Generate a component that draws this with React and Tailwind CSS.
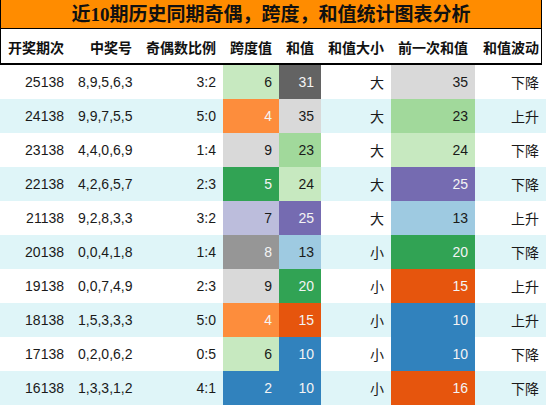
const rows = [
  ["25138", "8,9,5,6,3", "3:2", 6, "#c7e9c0", 31, "#636363", "大", 35, "#d9d9d9", "下降"],
  ["24138", "9,9,7,5,5", "5:0", 4, "#fd8d3c", 35, "#d9d9d9", "大", 23, "#a1d99b", "上升"],
  ["23138", "4,4,0,6,9", "1:4", 9, "#d9d9d9", 23, "#a1d99b", "大", 24, "#c7e9c0", "下降"],
  ["22138", "4,2,6,5,7", "2:3", 5, "#31a354", 24, "#c7e9c0", "大", 25, "#756bb1", "下降"],
  ["21138", "9,2,8,3,3", "3:2", 7, "#bcbddc", 25, "#756bb1", "大", 13, "#9ecae1", "上升"],
  ["20138", "0,0,4,1,8", "1:4", 8, "#969696", 13, "#9ecae1", "小", 20, "#31a354", "下降"],
  ["19138", "0,0,7,4,9", "2:3", 9, "#d9d9d9", 20, "#31a354", "小", 15, "#e6550d", "上升"],
  ["18138", "1,5,3,3,3", "5:0", 4, "#fd8d3c", 15, "#e6550d", "小", 10, "#3182bd", "上升"],
  ["17138", "0,2,0,6,2", "0:5", 6, "#c7e9c0", 10, "#3182bd", "小", 10, "#3182bd", "下降"],
  ["16138", "1,3,3,1,2", "4:1", 2, "#3182bd", 10, "#3182bd", "小", 16, "#e6550d", "下降"],
];

// fills that get light text
const darkFills = ["#636363", "#fd8d3c", "#31a354", "#756bb1", "#969696", "#e6550d", "#3182bd"];

const headers = ["开奖期次", "中奖号", "奇偶数比例", "跨度值", "和值", "和值大小", "前一次和值", "和值波动"];

function Cell({ value, fill }) {
  const light = darkFills.includes(fill);
  return (
    <div
      className={"flex items-center justify-end pr-[7px] " + (light ? "text-[#f4f4f4]" : "text-[#1a1a1a]")}
      style={{ backgroundColor: fill }}
    >
      {value}
    </div>
  );
}

export default function App() {
  return (
    <div className="w-[546px] h-[406px] bg-white overflow-hidden font-['Liberation_Sans','Noto_Sans_CJK_SC',sans-serif]">
      <div className="w-[542px] border-x border-black">
        <div className="h-[29px] bg-[#ff8c00] border-b border-black flex items-center justify-center text-[19px] font-bold text-[#111] font-['Liberation_Serif','Noto_Sans_CJK_SC',serif] leading-none">
          近10期历史同期奇偶，跨度，和值统计图表分析
        </div>
        <div className="h-[36px] border-b-2 border-black grid grid-cols-[70px_68px_84px_56px_42px_70px_84px_66px] text-[14px] font-bold text-[#111] font-['Noto_Sans_CJK_SC',sans-serif]">
          {headers.map((h, i) => (
            <div key={h} className={"flex items-center justify-end pt-[3px] " + (i === 7 ? "pr-[2px]" : "pr-[7px]")}>
              {h}
            </div>
          ))}
        </div>
      </div>
      <div className="text-[14px] text-[#1a1a1a]">
        {rows.map((r, i) => (
          <div
            key={r[0]}
            className={"h-[34px] grid grid-cols-[71px_68px_84px_56px_42px_70px_84px_71px] " + (i % 2 ? "bg-[#dff5f8]" : "bg-white")}
          >
            <div className="flex items-center justify-end pr-[7px]">{r[0]}</div>
            <div className="flex items-center pl-[7px]">{r[1]}</div>
            <div className="flex items-center justify-end pr-[7px]">{r[2]}</div>
            <Cell value={r[3]} fill={r[4]} />
            <Cell value={r[5]} fill={r[6]} />
            <div className="flex items-center justify-end pr-[7px] font-['Noto_Sans_CJK_SC',sans-serif]">{r[7]}</div>
            <Cell value={r[8]} fill={r[9]} />
            <div className="flex items-center justify-end pr-[7px] font-['Noto_Sans_CJK_SC',sans-serif]">{r[10]}</div>
          </div>
        ))}
      </div>
    </div>
  );
}
